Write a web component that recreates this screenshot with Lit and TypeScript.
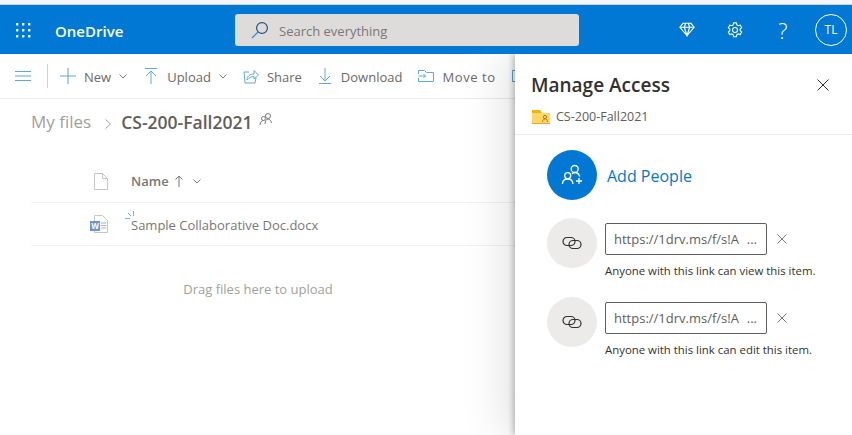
import {LitElement, html, css, svg} from 'lit'
import {customElement} from 'lit/decorators.js'

const chevron = html`<svg class="chev" width="8" height="5" viewBox="0 0 8 5"><path d="M.5.5L4 4 7.500.5" fill="none" stroke="currentColor"/></svg>`

@customElement('app-root')
class AppRoot extends LitElement {
  static styles = css`
    :host {
      display: block;
      width: 852px;
      height: 435px;
      overflow: hidden;
      background: #fff;
      font-family: "Open Sans", "Noto Sans", sans-serif;
      color: #323130;
    }
    svg {
      display: block;
      flex: none;
    }
    .page {
      display: flex;
      flex-direction: column;
      height: 435px;
    }
    .strip {
      height: 5px;
      background: #f6f6fa;
      border-bottom: 1px solid #c9d3dc;
      box-sizing: border-box;
      flex: none;
    }
    .suite {
      height: 49px;
      flex: none;
      background: #0078d4;
      color: #fff;
      display: flex;
      align-items: center;
      position: relative;
      z-index: 1;
    }
    .waffle {
      margin-left: 15px;
    }
    .brand {
      margin-left: 24px;
      width: 180px;
      font-size: 15px;
      font-weight: 600;
      padding-top: 2px;
    }
    .search {
      width: 344px;
      height: 32px;
      background: #dedcda;
      border-radius: 3px;
      display: flex;
      align-items: center;
      color: #7a7774;
      font-size: 13px;
      padding-left: 16px;
      box-sizing: border-box;
      gap: 10px;
    }
    .search span {
      padding-top: 2px;
    }
    .suite-right {
      margin-left: auto;
      display: flex;
      align-items: center;
    }
    .suite-btn {
      width: 48px;
      display: flex;
      justify-content: center;
    }
    .avatar {
      width: 32px;
      height: 32px;
      border: 1px solid #fff;
      border-radius: 50%;
      box-sizing: border-box;
      display: flex;
      align-items: center;
      justify-content: center;
      font-size: 12px;
      margin: 0 5px 0 8px;
    }
    .help {
      font-size: 22px;
      line-height: 22px;
      font-weight: 300;
    }
    .body {
      position: relative;
      flex: 1;
      min-height: 0;
    }
    .toolbar {
      height: 45px;
      box-sizing: border-box;
      border-bottom: 1px solid #edebe9;
      display: flex;
      align-items: center;
      padding-left: 15px;
      font-size: 13px;
      color: #6b6967;
      white-space: nowrap;
    }
    .divider {
      width: 1px;
      height: 24px;
      background: #d2d0ce;
      margin: 0 12px 0 16px;
    }
    .cmd {
      display: flex;
      align-items: center;
      gap: 8px;
      margin-right: 16px;
    }
    .cmd span {
      padding-top: 2px;
    }
    .cmd .wide {
      margin-left: 2px;
    }
    .cmd .move {
      letter-spacing: 0.6px;
    }
    .cmd.new {
      margin-right: 18px;
    }
    .cmd.share {
      margin-right: 17px;
    }
    .chev {
      color: #797775;
    }
    .crumbs {
      display: flex;
      align-items: center;
      height: 47px;
      padding-left: 31px;
      padding-bottom: 2px;
      box-sizing: border-box;
      color: #a19f9d;
      font-size: 17px;
    }
    .crumbs .sep {
      margin: 4px 10px 0 14px;
    }
    .crumbs b {
      color: #605e5c;
      font-weight: 600;
      font-size: 17.5px;
    }
    .crumbs .shared {
      margin: -6px 0 0 7px;
    }
    .list {
      margin: 14px 0 0 31px;
    }
    .list-head,
    .list-row {
      display: flex;
      align-items: center;
      border-bottom: 1px solid #f3f2f1;
      color: #797775;
      font-size: 13px;
    }
    .list-head {
      height: 42px;
      padding-left: 63px;
      gap: 23px;
      font-weight: 600;
    }
    .list-row {
      height: 42px;
      padding-left: 59px;
    }
    .sort {
      display: flex;
      align-items: center;
      gap: 6px;
    }
    .sort .chev {
      margin-left: 4px;
    }
    .file-name {
      position: relative;
      margin-left: 23px;
      padding-top: 2px;
    }
    .spark {
      position: absolute;
      left: -6px;
      top: -3px;
    }
    .empty {
      margin: 34px 0 0 -31px;
      text-align: center;
      width: 516px;
      font-size: 13px;
      color: #a19f9d;
    }
    .panel {
      position: absolute;
      left: 515px;
      top: 0;
      bottom: 0;
      right: 0;
      background: #fff;
      box-shadow: -2px 0 6px rgba(0, 0, 0, 0.25), -14px 0 40px rgba(0, 0, 0, 0.1);
    }
    .panel-head {
      height: 81px;
      box-sizing: border-box;
      border-bottom: 1px solid #edebe9;
      padding: 17px 23px 0 17px;
    }
    .title-row {
      display: flex;
      justify-content: space-between;
      align-items: center;
      height: 27px;
    }
    .title {
      font-size: 19px;
      font-weight: 600;
      margin-left: -1px;
    }
    .folder-row {
      display: flex;
      align-items: center;
      gap: 6px;
      margin-top: 10px;
      font-size: 12.5px;
      color: #605e5c;
    }
    .add {
      display: flex;
      align-items: center;
      gap: 10px;
      margin: 15px 0 0 32px;
      color: #0078d4;
      font-size: 16px;
    }
    .add span {
      padding-top: 2px;
    }
    .circle {
      width: 50px;
      height: 50px;
      border-radius: 50%;
      display: flex;
      align-items: center;
      justify-content: center;
      flex: none;
    }
    .add .circle {
      background: #0078d4;
    }
    .link {
      display: flex;
      gap: 8px;
      margin: 0 0 0 32px;
      height: 79px;
    }
    .link .circle {
      background: #edebe9;
    }
    .links {
      margin-top: 18px;
    }
    .link-col {
      padding-top: 5px;
    }
    .url-row {
      display: flex;
      align-items: center;
      gap: 10px;
    }
    .url {
      width: 162px;
      height: 32px;
      box-sizing: border-box;
      border: 1px solid #605e5c;
      border-radius: 2px;
      display: flex;
      align-items: center;
      justify-content: space-between;
      padding: 0 9px 0 8px;
      font-size: 13px;
      color: #605e5c;
      white-space: nowrap;
    }
    .note {
      font-size: 11.4px;
      margin-top: 8px;
      white-space: nowrap;
    }
  `

  private link(note: string) {
    return html`
      <div class="link">
        <div class="circle">
          <svg width="24" height="24" viewBox="0 0 24 24" fill="none" stroke="#323130" stroke-width="1.2">
            <rect x="3" y="6.500" width="12" height="8" rx="4"/>
            <rect x="9" y="9.500" width="12" height="8" rx="4"/>
          </svg>
        </div>
        <div class="link-col">
          <div class="url-row">
            <div class="url"><span>https://1drv.ms/f/s!A</span><span>...</span></div>
            <svg width="10" height="10" viewBox="0 0 10 10"><path d="M.5.500l9 9M9.500.500l-9 9" stroke="#797775" fill="none"/></svg>
          </div>
          <div class="note">${note}</div>
        </div>
      </div>
    `
  }

  render() {
    return html`
      <div class="page">
        <div class="strip"></div>
        <header class="suite">
          <svg class="waffle" width="16" height="16" viewBox="0 0 16 16" fill="#fff">
            ${[1, 7, 13].flatMap((y) => [1, 7, 13].map((x) => svg`<rect x=${x} y=${y} width="2.4" height="2.4" rx="0.6"/>`))}
          </svg>
          <div class="brand">OneDrive</div>
          <div class="search">
            <svg width="18" height="18" viewBox="0 0 18 18" fill="none" stroke="#2b88d8" stroke-width="1.2">
              <circle cx="11" cy="7" r="5.4" stroke="#24537a"/><path d="M7 11l-6 6"/>
            </svg>
            <span>Search everything</span>
          </div>
          <div class="suite-right">
            <div class="suite-btn">
              <svg width="16" height="15" viewBox="0 0 18 16" fill="none" stroke="#fff" stroke-width="1.3">
                <path d="M4.500 1h9L17 5.500 9 15 1 5.500zM1 5.500h16M6 5.500L9 15l3-9.500M6 5.500L7.500 1M12 5.500L10.500 1"/>
              </svg>
            </div>
            <div class="suite-btn">
              <svg width="16" height="16" viewBox="0 0 18 18" fill="none" stroke="#fff" stroke-width="1.2">
                <circle cx="9" cy="9" r="2.800"/>
                <path d="M7.400 1h3.200l.5 2.300 1.600.9 2.200-.7 1.600 2.800-1.700 1.600v1.800l1.700 1.600-1.600 2.800-2.200-.7-1.600.9-.5 2.300H7.400l-.5-2.300-1.600-.9-2.200.7-1.600-2.800 1.700-1.600V8.100L1.500 6.300l1.600-2.800 2.200.7 1.600-.9z"/>
              </svg>
            </div>
            <div class="suite-btn help">?</div>
            <div class="avatar">TL</div>
          </div>
        </header>
        <div class="body">
          <div class="toolbar">
            <svg width="16" height="10" viewBox="0 0 16 10" stroke="#5ea8e6" stroke-width="1"><path d="M0 .5h16M0 5h16M0 9.500h16"/></svg>
            <div class="divider"></div>
            <div class="cmd new">
              <svg width="16" height="16" viewBox="0 0 16 16" stroke="#5ea8e6" stroke-width="1.1"><path d="M8 0v16M0 8h16"/></svg>
              <span>New</span> ${chevron}
            </div>
            <div class="cmd">
              <svg width="12" height="16" viewBox="0 0 12 16" fill="none" stroke="#5ea8e6"><path d="M0 .5h12M6 16V3M1 8l5-5 5 5"/></svg>
              <span class="wide">Upload</span> ${chevron}
            </div>
            <div class="cmd share">
              <svg width="16" height="15" viewBox="0 0 16 15" fill="none" stroke="#5ea8e6"><path d="M6 3H1l1 11h10l1-5M4 11c0-4 3-6 7-6V1.500L15.500 6 11 10V7.500C8 7.500 6 9 4 11z"/></svg>
              <span>Share</span>
            </div>
            <div class="cmd">
              <svg width="12" height="16" viewBox="0 0 12 16" fill="none" stroke="#5ea8e6"><path d="M0 15.500h12M6 0v13M1 8l5 5 5-5"/></svg>
              <span class="wide">Download</span>
            </div>
            <div class="cmd">
              <svg width="16" height="12" viewBox="0 0 16 12" fill="none" stroke="#5ea8e6"><path d="M.5 4V.5h6l2 2h7v9H.5V8M.5 6h7M5.500 4l2 2-2 2"/></svg>
              <span class="move">Move to</span>
            </div>
            <div class="cmd">
              <svg width="16" height="12" viewBox="0 0 16 12" fill="none" stroke="#5ea8e6"><rect x=".5" y=".5" width="15" height="11"/></svg>
            </div>
          </div>
          <div class="crumbs">
            <span>My files</span>
            <svg class="sep" width="6" height="10" viewBox="0 0 6 10"><path d="M.5.500l5 4.500-5 4.500" fill="none" stroke="#a19f9d"/></svg>
            <b>CS-200-Fall2021</b>
            <svg class="shared" width="14" height="14" viewBox="0 0 14 14" fill="none" stroke="#797775"><circle cx="9" cy="4" r="2.500"/><circle cx="4.500" cy="6.500" r="2"/><path d="M1 13c0-3 2-4.500 3.500-4.500M6 12c0-3 1.500-5 3-5s3 1.500 3.500 4"/></svg>
          </div>
          <div class="list">
            <div class="list-head">
              <svg width="14" height="17" viewBox="0 0 14 17" fill="none" stroke="#c8c6c4"><path d="M.5.500h8l5 5v11H.5zM8.500.500v5h5"/></svg>
              <div class="sort">
                Name
                <svg width="8" height="12" viewBox="0 0 8 12" fill="none" stroke="#797775"><path d="M4 12V1M.5 4.500L4 1l3.500 3.500"/></svg>
                ${chevron}
              </div>
            </div>
            <div class="list-row">
              <svg width="18" height="18" viewBox="0 0 18 18">
                <path d="M4.500.500h8l5 5v12h-13z" fill="#fff" stroke="#c8c6c4"/>
                <rect x="11" y="7.500" width="5" height="1" fill="#8fb4e8"/><rect x="11" y="10" width="5" height="1" fill="#8fb4e8"/><rect x="11" y="12.500" width="5" height="1" fill="#8fb4e8"/>
                <rect x="0" y="6" width="10" height="10" fill="#6a94d8"/>
                <text x="5" y="14" font-size="8" font-weight="700" fill="#fff" text-anchor="middle" font-family="Open Sans">W</text>
              </svg>
              <div class="file-name">
                <svg class="spark" width="10" height="9" viewBox="0 0 10 9" fill="none" stroke="#6cb8f0"><path d="M0 7.500h5M3 2l3 3M8.500 0v5"/></svg>
                Sample Collaborative Doc.docx
              </div>
            </div>
            <div class="empty">Drag files here to upload</div>
          </div>
          <aside class="panel">
            <div class="panel-head">
              <div class="title-row">
                <div class="title">Manage Access</div>
                <svg width="12" height="12" viewBox="0 0 12 12"><path d="M.5.500l11 11M11.500.500l-11 11" stroke="#323130" fill="none"/></svg>
              </div>
              <div class="folder-row">
                <svg width="18" height="14" viewBox="0 0 18 14">
                  <path d="M0 0h8l2 3H0z" fill="#f5b400"/>
                  <rect y="3" width="18" height="11" fill="#ffd769"/>
                  <rect y="13" width="18" height="1" fill="#e8a820"/>
                  <circle cx="13" cy="7" r="1.600" fill="none" stroke="#c77700"/>
                  <path d="M10.500 12c0-2 1-3 2.500-3s2.500 1 2.500 3" fill="none" stroke="#c77700"/>
                </svg>
                CS-200-Fall2021
              </div>
            </div>
            <div class="add">
              <div class="circle">
                <svg width="24" height="24" viewBox="0 0 24 24" fill="none" stroke="#fff" stroke-width="1.300">
                  <circle cx="14.700" cy="6" r="3.500"/><circle cx="7.700" cy="12.700" r="3"/>
                  <path d="M2.500 21c0-3 2-5 5.200-5s5.200 2 5.200 5M12 11c1-1 1.700-1.500 2.700-1.500 2.500 0 4.300 1.500 5 4M19 15v6M16 18h6"/>
                </svg>
              </div>
              <span>Add People</span>
            </div>
            <div class="links">
              ${this.link('Anyone with this link can view this item.')}
              ${this.link('Anyone with this link can edit this item.')}
            </div>
          </aside>
        </div>
      </div>
    `
  }
}
